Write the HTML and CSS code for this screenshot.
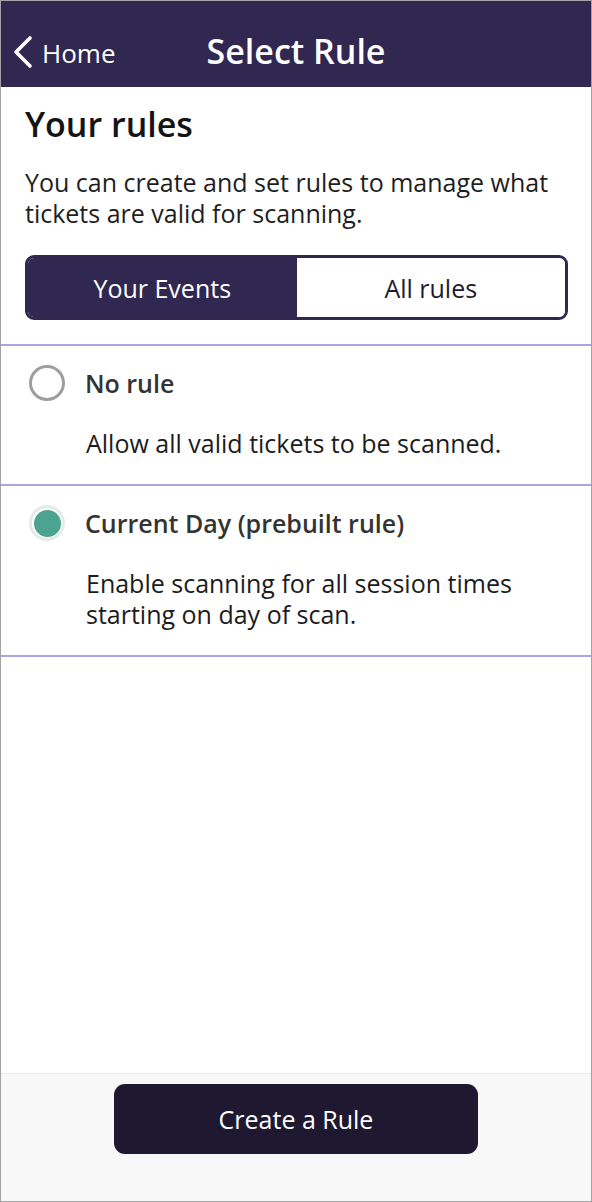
FILE: index.html
```html
<!DOCTYPE html>
<html lang="en">
<head>
<meta charset="utf-8">
<title>Select Rule</title>
<link rel="stylesheet" href="styles.css">
</head>
<body>
<div class="frame">
  <header class="topbar">
    <a class="back" href="#">
      <svg class="chev" width="22" height="34" viewBox="0 0 22 34" aria-hidden="true">
        <polyline points="18,3 4,17 18,31" fill="none" stroke="#ffffff" stroke-width="3.6" stroke-linecap="round" stroke-linejoin="round"/>
      </svg>
      <span>Home</span>
    </a>
    <h1 class="title">Select Rule</h1>
    <span class="spacer"></span>
  </header>

  <main class="content">
    <section class="intro">
      <h2 class="heading">Your rules</h2>
      <p class="lead">You can create and set rules to manage what tickets are valid for scanning.</p>
      <div class="segmented">
        <button class="seg seg-active">Your Events</button>
        <button class="seg">All rules</button>
      </div>
    </section>

    <ul class="rules">
      <li class="rule">
        <div class="rule-head">
          <span class="radio"></span>
          <span class="rule-name">No rule</span>
        </div>
        <p class="rule-desc">Allow all valid tickets to be scanned.</p>
      </li>
      <li class="rule">
        <div class="rule-head">
          <span class="radio radio-on"><span class="dot"></span></span>
          <span class="rule-name">Current Day (prebuilt rule)</span>
        </div>
        <p class="rule-desc">Enable scanning for all session times starting on day of scan.</p>
      </li>
    </ul>
  </main>

  <footer class="footer">
    <button class="create">Create a Rule</button>
  </footer>
</div>
</body>
</html>
```

FILE: styles.css
```css
* { box-sizing: border-box; }

html, body {
  margin: 0;
  padding: 0;
  background: #ffffff;
}

body {
  font-family: "Open Sans", "Noto Sans", "DejaVu Sans", sans-serif;
  color: #1c1c1c;
}

.frame {
  width: 592px;
  height: 1202px;
  border: 1px solid #a3a3a3;
  display: flex;
  flex-direction: column;
  background: #ffffff;
}

.topbar {
  height: 86px;
  flex: none;
  background: #302851;
  display: grid;
  grid-template-columns: 1fr auto 1fr;
  align-items: center;
  padding-top: 14px;
}

.back {
  display: flex;
  align-items: center;
  gap: 8px;
  padding-left: 11px;
  margin-top: 4px;
  color: #ffffff;
  text-decoration: none;
  font-size: 26px;
  line-height: 32px;
  justify-self: start;
}

.chev {
  display: block;
  margin-top: -3px;
}

.title {
  margin: 0;
  color: #ffffff;
  font-size: 34px;
  font-weight: 600;
  line-height: 44px;
}

.content {
  flex: 1;
  display: flex;
  flex-direction: column;
}

.intro {
  padding: 15px 23px 24px 24px;
  border-bottom: 2px solid #aba5e0;
}

.heading {
  margin: 0;
  font-size: 34px;
  line-height: 44px;
  font-weight: 600;
  color: #141414;
}

.lead {
  margin: 21px 0 0;
  font-size: 25px;
  line-height: 31px;
  color: #1e1e1e;
}

.segmented {
  margin-top: 26px;
  height: 65px;
  display: grid;
  grid-template-columns: 1fr 1fr;
  border: 3px solid #302851;
  border-radius: 9px;
  overflow: hidden;
}

.seg {
  border: 0;
  margin: 0;
  padding: 0;
  background: #ffffff;
  font-family: inherit;
  font-size: 25px;
  color: #1e1a30;
}

.seg-active {
  background: #302851;
  color: #ffffff;
}

.rules {
  list-style: none;
  margin: 0;
  padding: 0;
}

.rule {
  padding: 19px 20px 25px 28px;
  border-bottom: 2px solid #aba5e0;
}

.rule-head {
  display: flex;
  align-items: center;
  gap: 20px;
}

.radio {
  flex: none;
  width: 36px;
  height: 36px;
  border-radius: 50%;
  border: 3px solid #9e9e9e;
  display: flex;
  align-items: center;
  justify-content: center;
}

.radio-on {
  border-color: #e4ebe9;
}

.dot {
  width: 27px;
  height: 27px;
  border-radius: 50%;
  background: #4ca38f;
}

.rule-name {
  font-size: 25px;
  line-height: 31px;
  font-weight: 600;
  color: #333333;
}

.rule-desc {
  margin: 27px 0 0 57px;
  font-size: 25px;
  line-height: 31px;
  color: #1c1c1c;
}

.footer {
  flex: none;
  height: 128px;
  background: #f8f8f8;
  border-top: 1px solid #ececec;
  display: flex;
  justify-content: center;
  align-items: flex-start;
  padding-top: 10px;
}

.create {
  width: 364px;
  height: 70px;
  border: 0;
  border-radius: 11px;
  background: #1e1930;
  color: #ffffff;
  font-family: inherit;
  font-size: 25px;
}
```
